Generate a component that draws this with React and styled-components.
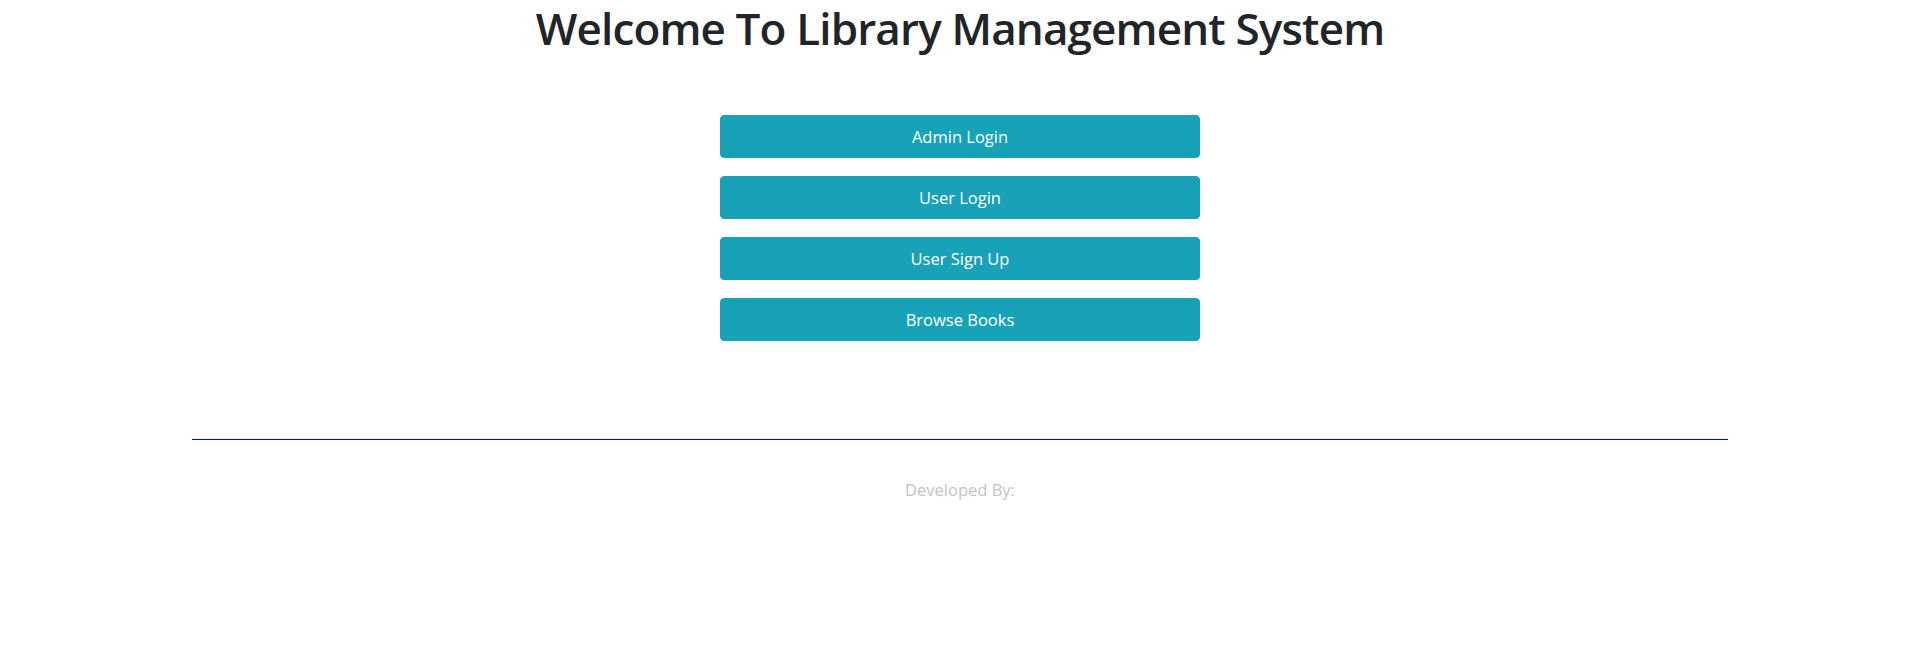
import React from 'react';
import styled, { createGlobalStyle } from 'styled-components';

const GlobalStyle = createGlobalStyle`
  body {
    margin: 0;
    background: #fff;
    font-family: 'Open Sans', 'Liberation Sans', sans-serif;
    color: #212529;
  }
`;

const links = ['Admin Login', 'User Login', 'User Sign Up', 'Browse Books'];

const App = () => {
  return (
    <>
      <GlobalStyle />
      <Page>
        <Title>Welcome To Library Management System</Title>
        <ButtonList>
          {links.map((label) => (
            <LinkButton key={label} type="button">
              {label}
            </LinkButton>
          ))}
        </ButtonList>
        <Divider />
        <Footer>Developed By:</Footer>
      </Page>
    </>
  );
};

const Page = styled.main`
  display: flex;
  flex-direction: column;
  align-items: center;
  width: 100%;
`;

const Title = styled.h1`
  margin: 0;
  font-size: 44px;
  font-weight: 600;
  line-height: 57px;
  letter-spacing: -0.85px;
  text-align: center;
  color: #212529;
`;

const ButtonList = styled.div`
  display: flex;
  flex-direction: column;
  gap: 18px;
  width: 480px;
  margin-top: 58px;
`;

const LinkButton = styled.button`
  height: 43px;
  border: 1px solid #17a2b8;
  border-radius: 4px;
  background: #17a2b8;
  color: #fff;
  font-family: 'Open Sans', 'Liberation Sans', sans-serif;
  font-size: 16.5px;
  text-align: center;
  cursor: pointer;
`;

const Divider = styled.hr`
  width: 80%;
  height: 0;
  margin: 98px 0 0;
  border: 0;
  border-top: 1px solid #0000ff;
`;

const Footer = styled.p`
  margin: 38px 0 0;
  font-size: 16.5px;
  line-height: 1.5;
  color: #c4c4c4;
`;

export default App;
